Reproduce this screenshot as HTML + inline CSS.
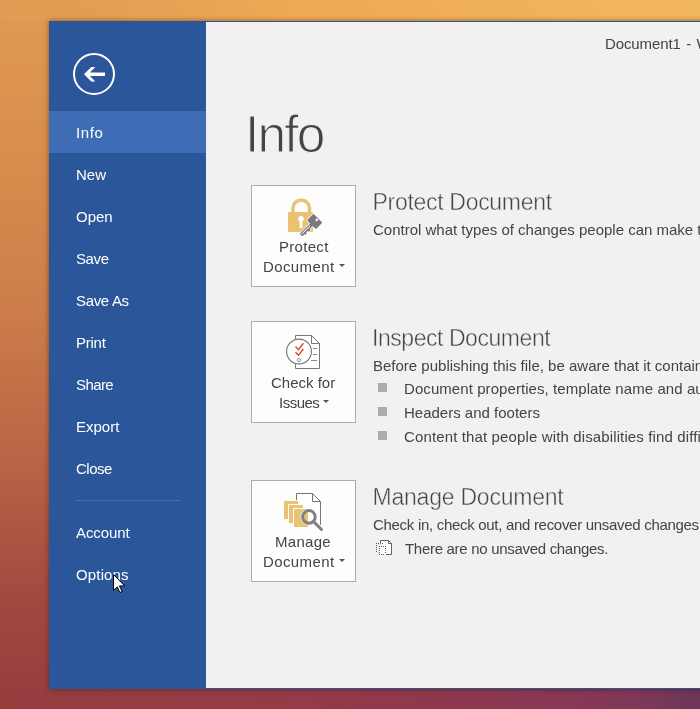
<!DOCTYPE html>
<html><head><meta charset="utf-8">
<style>
*{margin:0;padding:0;box-sizing:border-box}
html,body{width:700px;height:709px;overflow:hidden}
body>*{will-change:transform}
body{position:relative;font-family:"Liberation Sans",sans-serif;
background:linear-gradient(180deg,rgb(225,155,82) 0%,rgb(216,142,77) 21%,rgb(205,127,74) 42%,rgb(188,102,70) 63%,rgb(163,72,64) 85%,rgb(149,61,62) 100%);}
#bgt{position:absolute;left:0;top:0;width:700px;height:21px;
background:linear-gradient(90deg,rgb(225,155,82) 0%,rgb(226,158,83) 14%,rgb(238,170,85) 43%,rgb(242,180,92) 86%,rgb(242,182,95) 100%);}
#bgb{position:absolute;left:0;top:689px;width:700px;height:20px;
background:linear-gradient(90deg,rgb(150,62,62) 0%,rgb(148,58,72) 43%,rgb(142,56,78) 64%,rgb(132,56,86) 86%,rgb(122,56,90) 93%,rgb(110,54,88) 99%);}
#win{position:absolute;left:49px;top:21px;width:700px;height:668px;background:#f1f1f1;
border-top:1px solid #2b579a;border-bottom:1px solid #2b579a;
box-shadow:0 0 5px rgba(60,20,0,0.55);}
#side{position:absolute;left:49px;top:21px;width:157px;height:668px;background:#2b579a}
.t{position:absolute;white-space:nowrap;line-height:1}
.m{left:76px;color:#fff;font-size:15px}
#sel{position:absolute;left:49px;top:111px;width:157px;height:42px;background:#3e6db5}
#sep{position:absolute;left:76px;top:500px;width:104px;height:1px;background:#4470b5}
.box{position:absolute;left:251px;width:105px;height:102px;background:#fdfdfd;border:1px solid #ababab}
.bt{position:absolute;color:#444;font-size:15px;line-height:1;white-space:nowrap}
.h{left:373px;color:#444;font-size:22px}
.hs{position:absolute;left:373px;width:327px;height:34px;overflow:visible}
.hs text{font-family:"Liberation Sans";font-size:23px;fill:#444;stroke:#f1f1f1;stroke-width:0.45px}
.d{left:373px;color:#444;font-size:15px}
.bl{position:absolute;left:378px;width:9px;height:9px;background:#acacac}
.arr{display:inline-block;width:0;height:0;border-left:3px solid transparent;border-right:3px solid transparent;border-top:3px solid #555;vertical-align:middle;margin-left:4px;position:relative;top:-3px}
</style></head><body>
<div id="bgt"></div><div id="bgb"></div>
<div id="win"></div>
<div id="side"></div>
<div id="sel"></div>
<svg style="position:absolute;left:0;top:0" width="700" height="709">
  <circle cx="94" cy="74" r="20" fill="none" stroke="#fff" stroke-width="2"/>
  <path d="M84,74.3 L91.3,67 L95.3,67 L89.9,72.6 L105,72.6 L105,76 L89.9,76 L95.3,81.6 L91.3,81.6 Z" fill="#fff"/>
</svg>
<div class="t m" style="top:125px;letter-spacing:0.6px">Info</div>
<div class="t m" style="top:167px">New</div>
<div class="t m" style="top:209px">Open</div>
<div class="t m" style="top:251px;letter-spacing:-0.4px">Save</div>
<div class="t m" style="top:293px;letter-spacing:-0.33px">Save As</div>
<div class="t m" style="top:335px;letter-spacing:-0.25px">Print</div>
<div class="t m" style="top:377px;letter-spacing:-0.6px">Share</div>
<div class="t m" style="top:419px">Export</div>
<div class="t m" style="top:461px;letter-spacing:-0.5px">Close</div>
<div id="sep"></div>
<div class="t m" style="top:525px;letter-spacing:-0.1px">Account</div>
<div class="t m" style="top:567px;letter-spacing:0.15px">Options</div>

<div class="t" style="left:604.5px;top:36px;font-size:15px;color:#444;word-spacing:1.3px;letter-spacing:-0.1px">Document1 - Word</div>
<svg style="position:absolute;left:0;top:0" width="700" height="709"><text x="245" y="152.3" font-family="Liberation Sans" font-size="51.5" letter-spacing="-1.8" fill="#444" stroke="#f1f1f1" stroke-width="1.1">Info</text></svg>

<div class="box" style="top:185px"></div>
<div class="box" style="top:321px"></div>
<div class="box" style="top:480px"></div>


<svg style="position:absolute;left:0;top:0" width="700" height="709">
 <!-- lock -->
 <path d="M292.9,213 V208.3 A8.3,8.3 0 0 1 309.5,208.3 V213" stroke="#e9c272" stroke-width="3.5" fill="none"/>
 <rect x="288" y="212" width="25" height="20" rx="1.2" fill="#e9c272"/>
 <circle cx="301" cy="218.8" r="2.7" fill="#fff"/>
 <path d="M299.8,219 L302.2,219 L302.5,228 L299.5,228 Z" fill="#fff"/>
 <g transform="translate(314.7,221.4) rotate(135)">
  <path d="M-4.6,-5.3 Q-4.6,-6.3 -3.6,-6.3 L3.6,-6.3 Q4.6,-6.3 4.6,-5.3 L4.6,5.3 Q4.6,6.3 3.6,6.3 L-3.6,6.3 Q-4.6,6.3 -4.6,5.3 Z M4,-1.8 L8.8,-1.8 L9.3,-3.2 L11.3,-3.2 L11.6,-1.8 L13.8,-1.8 L14.2,-3 L16,-3 L16.3,-1.8 L18.6,-1.8 Q19.6,-1.8 19.6,0 Q19.6,1.8 18.6,1.8 L4,1.8 Z" fill="#fdfdfd" stroke="#fdfdfd" stroke-width="1.4"/>
  <path d="M-4.6,-5.3 Q-4.6,-6.3 -3.6,-6.3 L3.6,-6.3 Q4.6,-6.3 4.6,-5.3 L4.6,5.3 Q4.6,6.3 3.6,6.3 L-3.6,6.3 Q-4.6,6.3 -4.6,5.3 Z M4,-1.8 L8.8,-1.8 L9.3,-3.2 L11.3,-3.2 L11.6,-1.8 L13.8,-1.8 L14.2,-3 L16,-3 L16.3,-1.8 L18.6,-1.8 Q19.6,-1.8 19.6,0 Q19.6,1.8 18.6,1.8 L4,1.8 Z" fill="#7a7a7a"/>
 </g>
 <g transform="translate(314.7,221.4) rotate(135)">
  <circle cx="-2.6" cy="-0.4" r="1.3" fill="#fff"/>
  <rect x="6.5" y="-0.2" width="12" height="0.75" fill="#fff"/>
 </g>
 <!-- check for issues -->
 <path d="M295.5,335.5 H311.5 L319.5,343.5 V368.5 H295.5 Z" fill="#fff" stroke="#777" stroke-width="1"/>
 <path d="M311.5,335.5 V343.5 H319.5" fill="none" stroke="#777" stroke-width="1"/>
 <path d="M313,348.5 H317 M313,354.5 H317 M311,360.5 H317" stroke="#888" stroke-width="1"/>
 <circle cx="299" cy="351.5" r="13.2" fill="#fdfdfd"/><circle cx="299" cy="351.5" r="12.4" fill="#fff" stroke="#707070" stroke-width="1.1"/>
 <path d="M295.5,346.5 L298.5,349.7 L303.4,343.3 M295.5,352.2 L298.5,355.2 L303.4,349" fill="none" stroke="#d24b2a" stroke-width="1.4"/>
 <circle cx="299" cy="360" r="1.6" fill="none" stroke="#888" stroke-width="0.9"/>
 <!-- manage document -->
 <path d="M296.5,500 V493.5 H312.5 L320.5,501.5 V526" fill="#fff" stroke="#777" stroke-width="1"/>
 <path d="M312.5,493.5 V501.5 H320.5" fill="none" stroke="#777" stroke-width="1"/>
 <rect x="284" y="501" width="14" height="18" fill="#e9c272"/>
 <rect x="288" y="504" width="16" height="20" fill="#fdfdfd"/>
 <rect x="289" y="505" width="14" height="18" fill="#e9c272"/>
 <rect x="293" y="508" width="16" height="20" fill="#fdfdfd"/>
 <rect x="294" y="509" width="14" height="18" fill="#e9c272"/>
 <circle cx="308.9" cy="516.9" r="7.6" fill="none" stroke="#fdfdfd" stroke-width="1.5"/>
 <circle cx="308.9" cy="516.9" r="4.7" fill="#fff"/>
 <clipPath id="lens"><circle cx="308.9" cy="516.9" r="4.8"/></clipPath><rect x="300" y="509" width="8" height="18" fill="#e9c272" clip-path="url(#lens)"/>
 <path d="M314,522 L321.8,529.8" stroke="#fdfdfd" stroke-width="5" stroke-linecap="round"/>
 <circle cx="308.9" cy="516.9" r="6.3" fill="none" stroke="#7f7f7f" stroke-width="3"/>
 <path d="M314,522 L321.5,529.5" stroke="#7f7f7f" stroke-width="3" stroke-linecap="round"/>
 <!-- small doc icon -->
 <path d="M380.5,544 V540.5 H388.5 L391.5,543.5 V554.5 H385" fill="#fff" stroke="#666" stroke-width="1"/>
 <rect x="379" y="546" width="7" height="9" fill="#fff"/>
 <path d="M388.5,540.5 V543.5 H391.5" fill="none" stroke="#666" stroke-width="1"/>
 <path d="M376,543h1v1h-1zM378,543h1v1h-1zM382,543h1v1h-1zM376,545h1v1h-1zM376,547h1v1h-1zM376,549h1v1h-1zM376,551h1v1h-1zM379,546h1v1h-1zM381,546h1v1h-1zM383,546h1v1h-1zM385,546h1v1h-1zM379,548h1v1h-1zM379,550h1v1h-1zM379,552h1v1h-1zM379,554h1v1h-1zM381,554h1v1h-1zM383,554h1v1h-1zM385,548h1v1h-1zM385,550h1v1h-1zM385,552h1v1h-1z" fill="#5a5a5a"/>
</svg>
<div class="bt" style="left:279px;top:239px;letter-spacing:0.3px">Protect</div>
<div class="bt" style="left:263px;top:259px;letter-spacing:0.4px">Document<span class="arr"></span></div>
<div class="bt" style="left:271px;top:375px">Check for</div>
<div class="bt" style="left:279px;top:395px;letter-spacing:-0.5px">Issues<span class="arr"></span></div>
<div class="bt" style="left:275px;top:534px;letter-spacing:0.3px">Manage</div>
<div class="bt" style="left:263px;top:554px;letter-spacing:0.4px">Document<span class="arr"></span></div>

<svg class="hs" style="top:185px"><text x="-0.5" y="25.3" letter-spacing="-0.3">Protect Document</text></svg>
<div class="t d" style="top:222px">Control what types of changes people can make to this document.</div>

<svg class="hs" style="top:321px"><text x="-1" y="25.3" letter-spacing="-0.45">Inspect Document</text></svg>
<div class="t d" style="top:358px">Before publishing this file, be aware that it contains:</div>
<div class="bl" style="top:383px"></div>
<div class="t d" style="left:404px;top:381px;letter-spacing:0.07px">Document properties, template name and author's name</div>
<div class="bl" style="top:407px"></div>
<div class="t d" style="left:404px;top:405px">Headers and footers</div>
<div class="bl" style="top:431px"></div>
<div class="t d" style="left:404px;top:429px;letter-spacing:0.13px">Content that people with disabilities find difficult to read</div>

<svg class="hs" style="top:480px"><text x="-0.5" y="25.3" letter-spacing="-0.22">Manage Document</text></svg>
<div class="t d" style="top:517px;letter-spacing:-0.3px">Check in, check out, and recover unsaved changes.</div>
<div class="t d" style="left:405px;top:541px;letter-spacing:-0.3px">There are no unsaved changes.</div>
<svg style="position:absolute;left:0;top:0" width="700" height="709"><path transform="translate(113.5,574.5)" d="M0,0 L0,16 L3.8,12.4 L6.4,18 L8.6,17 L6,11.4 L11.2,11.4 Z" fill="#fff" stroke="#000" stroke-width="1" stroke-linejoin="miter"/></svg>
</body></html>
